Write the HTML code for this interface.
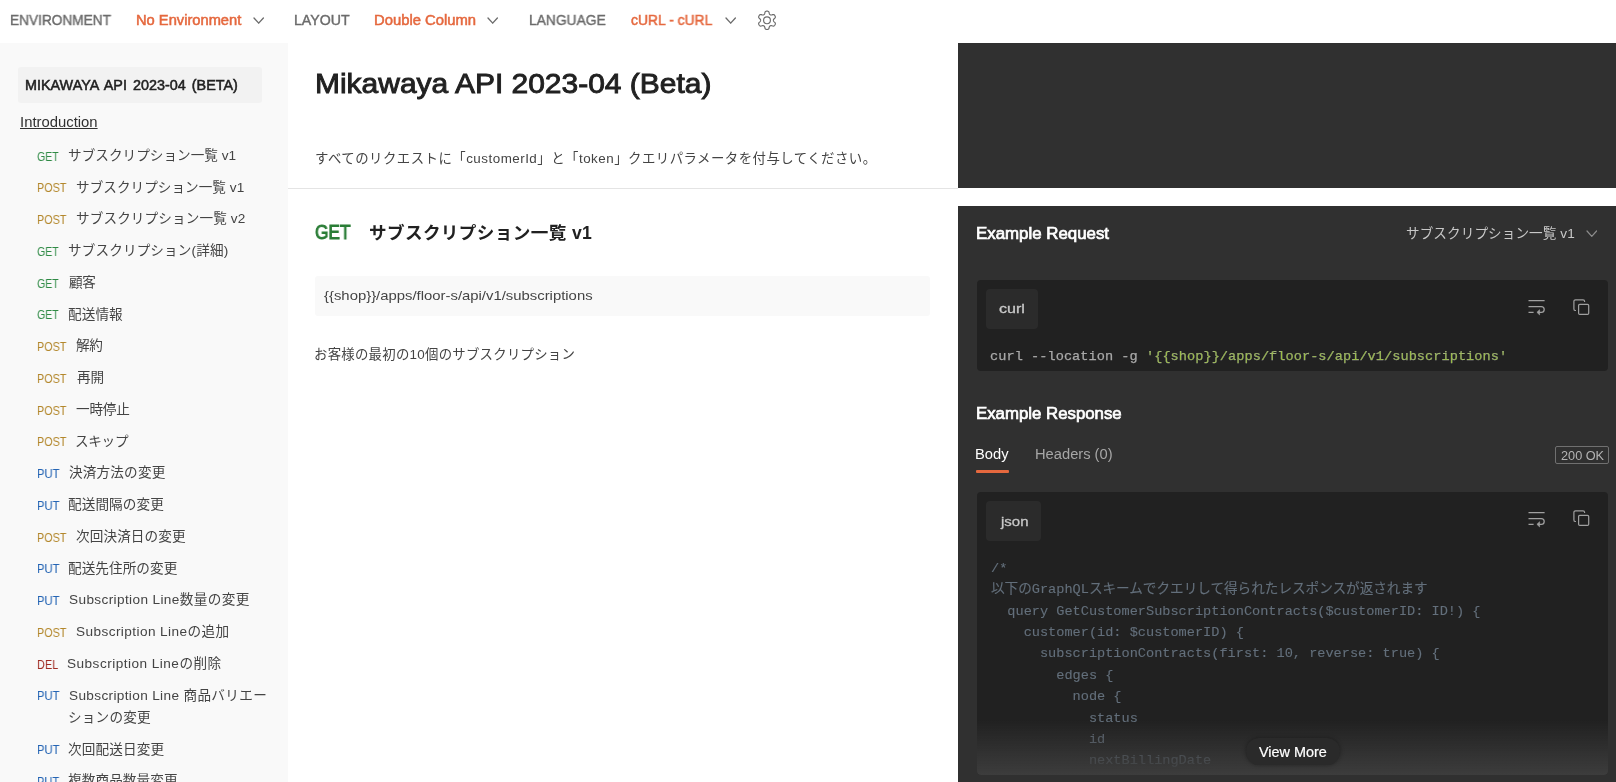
<!DOCTYPE html>
<html lang="ja">
<head>
<meta charset="utf-8">
<title>Mikawaya API 2023-04 (Beta)</title>
<style>
*{box-sizing:border-box;margin:0;padding:0}
html,body{width:1616px;height:782px;overflow:hidden;background:#fff}
body{font-family:"Liberation Sans","Noto Sans CJK JP",sans-serif;color:#212121;position:relative;font-size:14px}
.t{position:absolute;white-space:pre;display:block;will-change:transform}
.a{position:absolute;display:block}
.mono{font-family:"Liberation Mono","Noto Sans CJK JP",monospace}
</style>
</head>
<body>

<div class="a" id="side" style="left:0;top:43.4px;width:287.6px;height:740px;background:#f9f9f9"></div>
<div class="a" style="left:18px;top:66.8px;width:244.3px;height:36px;background:#f2f2f2;border-radius:3px"></div>
<div class="a" style="left:287.6px;top:188px;width:670.3px;height:1px;background:#e4e4e4"></div>
<div class="a" style="left:315px;top:275.5px;width:615px;height:40.8px;background:#f9f9f9;border-radius:3px"></div>
<div class="a" style="left:957.9px;top:43.2px;width:660px;height:144.4px;background:#303030"></div>
<div class="a" style="left:957.9px;top:206.3px;width:660px;height:580px;background:#303030"></div>
<div class="a" style="left:976.6px;top:279.6px;width:631.6px;height:91.8px;background:#212121;border-radius:4px"></div>
<div class="a" style="left:986.2px;top:289.2px;width:52px;height:40.3px;background:#2b2b2b;border-radius:4px"></div>
<div class="a" style="left:976.6px;top:491.5px;width:631.6px;height:283.9px;background:#212121;border-radius:4px"></div>
<div class="a" style="left:986.2px;top:501.2px;width:54.5px;height:39.6px;background:#2b2b2b;border-radius:4px"></div>
<div class="a" style="left:976px;top:470px;width:32.8px;height:2.5px;background:#e5683e;border-radius:1px"></div>
<div class="a" style="left:1555.1px;top:446.1px;width:54.2px;height:18.2px;border:1px solid #707070;border-radius:2px"></div>
<svg class="a" style="left:253.40px;top:17.30px" width="11.4" height="7.2" viewBox="0 0 11.4 7.2"><path d="M1.00 1.00 L5.70 6.20 L10.40 1.00" fill="none" stroke="#6b6b6b" stroke-width="1.3" stroke-linecap="round" stroke-linejoin="round"/></svg>
<svg class="a" style="left:487.40px;top:17.30px" width="11.4" height="7.2" viewBox="0 0 11.4 7.2"><path d="M1.00 1.00 L5.70 6.20 L10.40 1.00" fill="none" stroke="#6b6b6b" stroke-width="1.3" stroke-linecap="round" stroke-linejoin="round"/></svg>
<svg class="a" style="left:724.70px;top:17.30px" width="11.4" height="7.2" viewBox="0 0 11.4 7.2"><path d="M1.00 1.00 L5.70 6.20 L10.40 1.00" fill="none" stroke="#6b6b6b" stroke-width="1.3" stroke-linecap="round" stroke-linejoin="round"/></svg>
<svg class="a" style="left:757px;top:10px" width="20" height="21" viewBox="757 10 20 21"><path d="M773.43 20.30 L773.44 20.64 L773.51 20.98 L773.70 21.36 L774.14 21.82 L774.77 22.38 L775.24 22.98 L775.38 23.52 L775.31 24.00 L775.14 24.45 L774.92 24.88 L774.66 25.28 L774.36 25.65 L773.97 25.95 L773.44 26.10 L772.69 25.99 L771.88 25.72 L771.27 25.57 L770.85 25.59 L770.51 25.71 L770.21 25.87 L769.93 26.05 L769.66 26.28 L769.43 26.63 L769.25 27.24 L769.08 28.07 L768.80 28.77 L768.40 29.16 L767.95 29.34 L767.48 29.43 L767.00 29.45 L766.52 29.43 L766.05 29.34 L765.60 29.16 L765.20 28.77 L764.92 28.07 L764.75 27.24 L764.57 26.63 L764.34 26.28 L764.07 26.05 L763.79 25.87 L763.49 25.71 L763.15 25.59 L762.73 25.57 L762.12 25.72 L761.31 25.99 L760.56 26.10 L760.03 25.95 L759.64 25.65 L759.34 25.28 L759.08 24.88 L758.86 24.45 L758.69 24.00 L758.62 23.52 L758.76 22.98 L759.23 22.38 L759.86 21.82 L760.30 21.36 L760.49 20.98 L760.56 20.64 L760.57 20.30 L760.56 19.96 L760.49 19.62 L760.30 19.24 L759.86 18.78 L759.23 18.22 L758.76 17.62 L758.62 17.08 L758.69 16.60 L758.86 16.15 L759.08 15.73 L759.34 15.32 L759.64 14.95 L760.03 14.65 L760.56 14.50 L761.31 14.61 L762.12 14.88 L762.73 15.03 L763.15 15.01 L763.49 14.89 L763.79 14.73 L764.07 14.55 L764.34 14.32 L764.57 13.97 L764.75 13.36 L764.92 12.53 L765.20 11.83 L765.60 11.44 L766.05 11.26 L766.52 11.17 L767.00 11.15 L767.48 11.17 L767.95 11.26 L768.40 11.44 L768.80 11.83 L769.08 12.53 L769.25 13.36 L769.43 13.97 L769.66 14.32 L769.93 14.55 L770.21 14.73 L770.51 14.89 L770.85 15.01 L771.27 15.03 L771.88 14.88 L772.69 14.61 L773.44 14.50 L773.97 14.65 L774.36 14.95 L774.66 15.32 L774.92 15.73 L775.14 16.15 L775.31 16.60 L775.38 17.08 L775.24 17.62 L774.77 18.22 L774.14 18.78 L773.70 19.24 L773.51 19.62 L773.44 19.96Z" fill="none" stroke="#6b6b6b" stroke-width="1.15" stroke-linejoin="round"/><circle cx="767" cy="20.3" r="3.4" fill="none" stroke="#6b6b6b" stroke-width="1.15"/></svg>
<svg class="a" style="left:1585.60px;top:230.20px" width="11.6" height="7.4" viewBox="0 0 11.6 7.4"><path d="M1.00 1.00 L5.80 6.40 L10.60 1.00" fill="none" stroke="#8c8c8c" stroke-width="1.2" stroke-linecap="round" stroke-linejoin="round"/></svg>
<svg class="a" style="left:1527.9px;top:299.1px" width="18" height="17" viewBox="0 0 18 17"><path d="M0.5 1.7H16.6M0.5 7.5H13.3A2.9 2.9 0 0 1 13.3 13.3H10.2M0.5 13.3H5.6" fill="none" stroke="#a0a0a0" stroke-width="1.25"/><path d="M11.6 10.7L8.9 13.3L11.6 15.9Z" fill="#a0a0a0" stroke="#a0a0a0" stroke-width=".6" stroke-linejoin="round"/></svg>
<svg class="a" style="left:1572.6px;top:298.6px" width="18" height="18" viewBox="0 0 18 18"><rect x="5.6" y="5.3" width="10.1" height="10.1" rx="1.2" fill="none" stroke="#a0a0a0" stroke-width="1.2"/><path d="M11.6 2.9V2.4A1.6 1.6 0 0 0 10 0.8H2.5A1.6 1.6 0 0 0 0.9 2.4V9.9A1.6 1.6 0 0 0 2.5 11.5H3" fill="none" stroke="#a0a0a0" stroke-width="1.2"/></svg>
<svg class="a" style="left:1527.9px;top:510.6px" width="18" height="17" viewBox="0 0 18 17"><path d="M0.5 1.7H16.6M0.5 7.5H13.3A2.9 2.9 0 0 1 13.3 13.3H10.2M0.5 13.3H5.6" fill="none" stroke="#a0a0a0" stroke-width="1.25"/><path d="M11.6 10.7L8.9 13.3L11.6 15.9Z" fill="#a0a0a0" stroke="#a0a0a0" stroke-width=".6" stroke-linejoin="round"/></svg>
<svg class="a" style="left:1572.6px;top:510px" width="18" height="18" viewBox="0 0 18 18"><rect x="5.6" y="5.3" width="10.1" height="10.1" rx="1.2" fill="none" stroke="#a0a0a0" stroke-width="1.2"/><path d="M11.6 2.9V2.4A1.6 1.6 0 0 0 10 0.8H2.5A1.6 1.6 0 0 0 0.9 2.4V9.9A1.6 1.6 0 0 0 2.5 11.5H3" fill="none" stroke="#a0a0a0" stroke-width="1.2"/></svg>
<span class="t" id="t1" style="left:9.75px;top:10.15px;font-size:14px;line-height:20px;color:#6b6b6b;-webkit-text-stroke:0.4px #6b6b6b;transform:scaleX(0.9754);transform-origin:0 0;">ENVIRONMENT</span>
<span class="t" id="t2" style="left:135.93px;top:10.15px;font-size:14px;line-height:20px;color:#e5683e;-webkit-text-stroke:0.5px #e5683e;transform:scaleX(1.0487);transform-origin:0 0;">No Environment</span>
<span class="t" id="t3" style="left:293.77px;top:10.15px;font-size:14px;line-height:20px;color:#6b6b6b;-webkit-text-stroke:0.4px #6b6b6b;transform:scaleX(1.0114);transform-origin:0 0;">LAYOUT</span>
<span class="t" id="t4" style="left:374.49px;top:10.15px;font-size:14px;line-height:20px;color:#e5683e;-webkit-text-stroke:0.5px #e5683e;transform:scaleX(1.0575);transform-origin:0 0;">Double Column</span>
<span class="t" id="t5" style="left:529.05px;top:10.15px;font-size:14px;line-height:20px;color:#6b6b6b;-webkit-text-stroke:0.4px #6b6b6b;transform:scaleX(0.9869);transform-origin:0 0;">LANGUAGE</span>
<span class="t" id="t6" style="left:631.35px;top:10.15px;font-size:14px;line-height:20px;color:#e5683e;-webkit-text-stroke:0.5px #e5683e;transform:scaleX(0.9920);transform-origin:0 0;">cURL - cURL</span>
<span class="t" id="s_ttl" style="left:24.64px;top:75.52px;font-size:13.8px;line-height:19px;color:#212121;-webkit-text-stroke:0.5px #212121;transform:scaleX(1.0417);transform-origin:0 0;word-spacing:2px;">MIKAWAYA API 2023-04 (BETA)</span>
<span class="t" id="s_intro" style="left:19.77px;top:112.15px;font-size:14px;line-height:20px;color:#303030;transform:scaleX(1.0606);transform-origin:0 0;text-decoration:underline;text-decoration-thickness:1px;text-underline-offset:0.6px;">Introduction</span>
<span class="t" id="sm0" style="left:37.14px;top:148.50px;font-size:12.4px;line-height:17px;color:#2f8a45;transform:scaleX(0.8468);transform-origin:0 0;">GET</span>
<span class="t" id="sl0" style="left:68.26px;top:145.79px;font-size:13.6px;line-height:19px;color:#444444;letter-spacing:0.038px;">サブスクリプション一覧 v1</span>
<span class="t" id="sm1" style="left:37.07px;top:180.25px;font-size:12.4px;line-height:17px;color:#b3872b;transform:scaleX(0.8684);transform-origin:0 0;">POST</span>
<span class="t" id="sl1" style="left:76.47px;top:177.54px;font-size:13.6px;line-height:19px;color:#444444;letter-spacing:0.042px;">サブスクリプション一覧 v1</span>
<span class="t" id="sm2" style="left:37.07px;top:212.00px;font-size:12.4px;line-height:17px;color:#b3872b;transform:scaleX(0.8684);transform-origin:0 0;">POST</span>
<span class="t" id="sl2" style="left:76.47px;top:209.29px;font-size:13.6px;line-height:19px;color:#444444;letter-spacing:0.124px;">サブスクリプション一覧 v2</span>
<span class="t" id="sm3" style="left:37.14px;top:243.75px;font-size:12.4px;line-height:17px;color:#2f8a45;transform:scaleX(0.8468);transform-origin:0 0;">GET</span>
<span class="t" id="sl3" style="left:68.26px;top:241.04px;font-size:13.6px;line-height:19px;color:#444444;letter-spacing:0.133px;">サブスクリプション(詳細)</span>
<span class="t" id="sm4" style="left:37.14px;top:275.50px;font-size:12.4px;line-height:17px;color:#2f8a45;transform:scaleX(0.8468);transform-origin:0 0;">GET</span>
<span class="t" id="sl4" style="left:68.96px;top:272.79px;font-size:13.6px;line-height:19px;color:#444444;letter-spacing:-0.296px;">顧客</span>
<span class="t" id="sm5" style="left:37.14px;top:307.25px;font-size:12.4px;line-height:17px;color:#2f8a45;transform:scaleX(0.8468);transform-origin:0 0;">GET</span>
<span class="t" id="sl5" style="left:68.36px;top:304.54px;font-size:13.6px;line-height:19px;color:#444444;letter-spacing:0.114px;">配送情報</span>
<span class="t" id="sm6" style="left:37.07px;top:339.00px;font-size:12.4px;line-height:17px;color:#b3872b;transform:scaleX(0.8684);transform-origin:0 0;">POST</span>
<span class="t" id="sl6" style="left:76.34px;top:336.29px;font-size:13.6px;line-height:19px;color:#444444;letter-spacing:-0.342px;">解約</span>
<span class="t" id="sm7" style="left:37.07px;top:370.75px;font-size:12.4px;line-height:17px;color:#b3872b;transform:scaleX(0.8684);transform-origin:0 0;">POST</span>
<span class="t" id="sl7" style="left:76.84px;top:368.04px;font-size:13.6px;line-height:19px;color:#444444;letter-spacing:-0.156px;">再開</span>
<span class="t" id="sm8" style="left:37.07px;top:402.50px;font-size:12.4px;line-height:17px;color:#b3872b;transform:scaleX(0.8684);transform-origin:0 0;">POST</span>
<span class="t" id="sl8" style="left:76.40px;top:399.79px;font-size:13.6px;line-height:19px;color:#444444;letter-spacing:-0.200px;">一時停止</span>
<span class="t" id="sm9" style="left:37.07px;top:434.25px;font-size:12.4px;line-height:17px;color:#b3872b;transform:scaleX(0.8684);transform-origin:0 0;">POST</span>
<span class="t" id="sl9" style="left:75.16px;top:431.54px;font-size:13.6px;line-height:19px;color:#444444;letter-spacing:-0.291px;">スキップ</span>
<span class="t" id="sm10" style="left:36.93px;top:466.00px;font-size:12.4px;line-height:17px;color:#2464b4;transform:scaleX(0.9065);transform-origin:0 0;">PUT</span>
<span class="t" id="sl10" style="left:68.63px;top:463.29px;font-size:13.6px;line-height:19px;color:#444444;letter-spacing:0.183px;">決済方法の変更</span>
<span class="t" id="sm11" style="left:36.93px;top:497.75px;font-size:12.4px;line-height:17px;color:#2464b4;transform:scaleX(0.9065);transform-origin:0 0;">PUT</span>
<span class="t" id="sl11" style="left:68.35px;top:495.04px;font-size:13.6px;line-height:19px;color:#444444;letter-spacing:0.101px;">配送間隔の変更</span>
<span class="t" id="sm12" style="left:37.07px;top:529.50px;font-size:12.4px;line-height:17px;color:#b3872b;transform:scaleX(0.8684);transform-origin:0 0;">POST</span>
<span class="t" id="sl12" style="left:76.04px;top:526.79px;font-size:13.6px;line-height:19px;color:#444444;letter-spacing:0.121px;">次回決済日の変更</span>
<span class="t" id="sm13" style="left:36.93px;top:561.25px;font-size:12.4px;line-height:17px;color:#2464b4;transform:scaleX(0.9065);transform-origin:0 0;">PUT</span>
<span class="t" id="sl13" style="left:68.45px;top:558.54px;font-size:13.6px;line-height:19px;color:#444444;letter-spacing:0.078px;">配送先住所の変更</span>
<span class="t" id="sm14" style="left:36.93px;top:593.00px;font-size:12.4px;line-height:17px;color:#2464b4;transform:scaleX(0.9065);transform-origin:0 0;">PUT</span>
<span class="t" id="sl14" style="left:68.67px;top:590.29px;font-size:13.6px;line-height:19px;color:#444444;letter-spacing:0.380px;">Subscription Line数量の変更</span>
<span class="t" id="sm15" style="left:37.07px;top:624.75px;font-size:12.4px;line-height:17px;color:#b3872b;transform:scaleX(0.8684);transform-origin:0 0;">POST</span>
<span class="t" id="sl15" style="left:76.26px;top:622.04px;font-size:13.6px;line-height:19px;color:#444444;letter-spacing:0.421px;">Subscription Lineの追加</span>
<span class="t" id="sm16" style="left:36.79px;top:656.50px;font-size:12.4px;line-height:17px;color:#a02c24;transform:scaleX(0.8794);transform-origin:0 0;">DEL</span>
<span class="t" id="sl16" style="left:66.51px;top:653.79px;font-size:13.6px;line-height:19px;color:#444444;letter-spacing:0.477px;">Subscription Lineの削除</span>
<span class="t" id="sm17" style="left:36.93px;top:688.25px;font-size:12.4px;line-height:17px;color:#2464b4;transform:scaleX(0.9065);transform-origin:0 0;">PUT</span>
<span class="t" id="sl17" style="left:68.67px;top:685.54px;font-size:13.6px;line-height:19px;color:#444444;letter-spacing:0.355px;">Subscription Line 商品バリエー</span>
<span class="t" id="sl18" style="left:67.89px;top:707.84px;font-size:13.6px;line-height:19px;color:#444444;letter-spacing:0.201px;">ションの変更</span>
<span class="t" id="sm19" style="left:36.93px;top:742.30px;font-size:12.4px;line-height:17px;color:#2464b4;transform:scaleX(0.9065);transform-origin:0 0;">PUT</span>
<span class="t" id="sl19" style="left:68.40px;top:739.59px;font-size:13.6px;line-height:19px;color:#444444;letter-spacing:0.149px;">次回配送日変更</span>
<span class="t" id="sm20" style="left:36.93px;top:774.05px;font-size:12.4px;line-height:17px;color:#2464b4;transform:scaleX(0.8927);transform-origin:0 0;">PUT</span>
<span class="t" id="sl20" style="left:68.46px;top:771.34px;font-size:13.6px;line-height:19px;color:#444444;letter-spacing:0.125px;">複数商品数量変更</span>
<span class="t" id="m_title" style="left:314.61px;top:64.00px;font-size:28px;line-height:39px;color:#212121;-webkit-text-stroke:0.9px #212121;transform:scaleX(1.0703);transform-origin:0 0;">Mikawaya API 2023-04 (Beta)</span>
<span class="t" id="m_desc" style="left:314.51px;top:149.06px;font-size:13.4px;line-height:19px;color:#444444;letter-spacing:0.488px;">すべてのリクエストに「customerId」と「token」クエリパラメータを付与してください。</span>
<span class="t" id="m_get" style="left:315.15px;top:218.88px;font-size:19.4px;line-height:27px;color:#2a7d36;-webkit-text-stroke:0.95px #2a7d36;transform:scaleX(0.8929);transform-origin:0 0;">GET</span>
<span class="t" id="m_h" style="left:369.36px;top:220.60px;font-size:17.6px;line-height:25px;color:#212121;font-weight:bold;letter-spacing:0.372px;">サブスクリプション一覧 v1</span>
<span class="t" id="m_url" style="left:323.93px;top:286.73px;font-size:13.2px;line-height:18px;color:#444444;transform:scaleX(1.1273);transform-origin:0 0;">{{shop}}/apps/floor-s/api/v1/subscriptions</span>
<span class="t" id="m_d2" style="left:314.20px;top:344.66px;font-size:13.4px;line-height:19px;color:#444444;letter-spacing:0.261px;">お客様の最初の10個のサブスクリプション</span>
<span class="t" id="r_req" style="left:975.58px;top:222.71px;font-size:16px;line-height:22px;color:#ffffff;-webkit-text-stroke:0.7px #ffffff;transform:scaleX(1.0536);transform-origin:0 0;">Example Request</span>
<span class="t" id="r_dd" style="left:1406.37px;top:224.39px;font-size:13.6px;line-height:19px;color:#c8c8c8;letter-spacing:0.084px;">サブスクリプション一覧 v1</span>
<span class="t" id="r_curl" style="left:999.26px;top:299.16px;font-size:13.4px;line-height:19px;color:#c8c8c8;-webkit-text-stroke:0.3px #c8c8c8;transform:scaleX(1.2026);transform-origin:0 0;">curl</span>
<span class="t mono" id="r_code" style="left:990.15px;top:346.88px;font-size:13.6px;line-height:19px;color:#a9a9a9;-webkit-text-stroke:0.25px #a9a9a9;letter-spacing:0.051px;">curl --location -g <span style="color:#98c03a">'{{shop}}/apps/floor-s/api/v1/subscriptions'</span></span>
<span class="t" id="r_resp" style="left:975.68px;top:402.71px;font-size:16px;line-height:22px;color:#ffffff;-webkit-text-stroke:0.7px #ffffff;transform:scaleX(1.0502);transform-origin:0 0;">Example Response</span>
<span class="t" id="r_body" style="left:975.32px;top:444.40px;font-size:14px;line-height:20px;color:#ffffff;transform:scaleX(1.0519);transform-origin:0 0;">Body</span>
<span class="t" id="r_hdr" style="left:1035.19px;top:444.40px;font-size:14px;line-height:20px;color:#a6a6a6;transform:scaleX(1.0495);transform-origin:0 0;">Headers (0)</span>
<span class="t" id="r_200" style="left:1560.55px;top:447.54px;font-size:12px;line-height:17px;color:#b4b4b4;transform:scaleX(1.0591);transform-origin:0 0;">200 OK</span>
<span class="t" id="r_json" style="left:1000.59px;top:511.56px;font-size:13.4px;line-height:19px;color:#c8c8c8;-webkit-text-stroke:0.3px #c8c8c8;transform:scaleX(1.1196);transform-origin:0 0;">json</span>
<pre class="t mono" id="r_pre" style="left:991.40px;top:557.70px;font-size:13.6px;line-height:21.36px;color:#636f7b;-webkit-text-stroke:.12px #636f7b">/*
以下のGraphQLスキームでクエリして得られたレスポンスが返されます
  query GetCustomerSubscriptionContracts($customerID: ID!) {
    customer(id: $customerID) {
      subscriptionContracts(first: 10, reverse: true) {
        edges {
          node {
            status
            id
            nextBillingDate</pre>
<div class="a" style="left:976.6px;top:720px;width:631.6px;height:55.4px;border-radius:0 0 4px 4px;background:linear-gradient(to bottom,rgba(61,61,61,0),rgba(61,61,61,1))"></div>
<div class="a" style="left:1245.6px;top:738.2px;width:94px;height:26.4px;border-radius:13.2px;background:#2a2a2a;box-shadow:0 0 4px rgba(0,0,0,.35)"></div>
<span class="t" id="r_vm" style="left:1259.15px;top:742.15px;font-size:14px;line-height:20px;color:#ffffff;-webkit-text-stroke:0.2px #ffffff;transform:scaleX(1.0290);transform-origin:0 0;">View More</span>
</body>
</html>
